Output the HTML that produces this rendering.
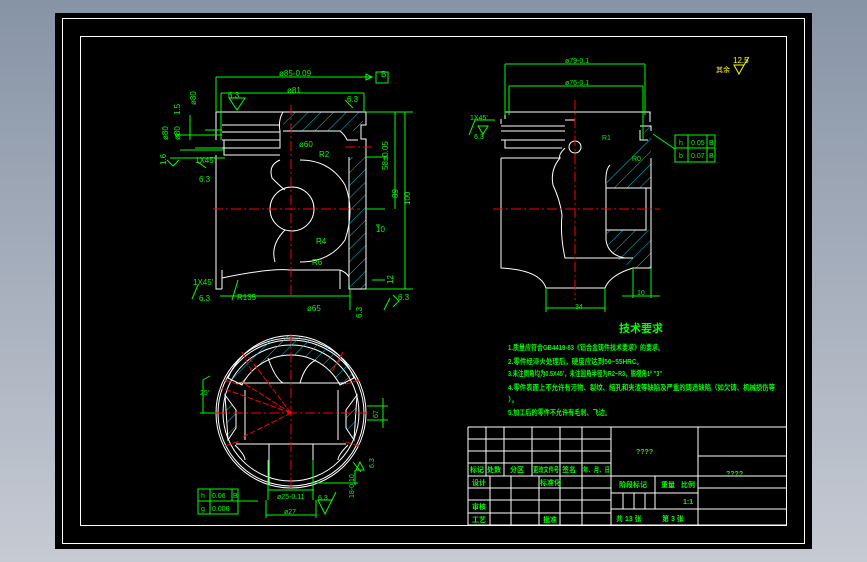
<!DOCTYPE html>
<html><head><meta charset="utf-8"><style>
html,body{margin:0;padding:0;width:867px;height:562px;overflow:hidden;background:linear-gradient(#8794a6,#c6cad3);}
svg{position:absolute;left:0;top:0}
text{font-family:"Liberation Sans","Noto Sans CJK SC",sans-serif;fill:#00ff00}
</style></head><body>
<svg width="867" height="562" viewBox="0 0 867 562">
<defs>
<pattern id="h" width="9" height="9" patternUnits="userSpaceOnUse" patternTransform="rotate(45)"><line x1="0" y1="0" x2="0" y2="9" stroke="#00c8e0" stroke-width="1"/></pattern>
</defs>
<rect x="55" y="13" width="757" height="536" fill="#000"/>
<rect x="62.5" y="18.5" width="742" height="525" fill="none" stroke="#fff" stroke-width="1"/>
<rect x="80.5" y="36.5" width="706" height="489" fill="none" stroke="#fff" stroke-width="1"/>

<!-- FRONT VIEW -->
<g fill="none" stroke="#fff" stroke-width="1">
<rect x="283" y="112" width="80" height="19" fill="url(#h)" stroke="none"/>
<rect x="349" y="157" width="17" height="132" fill="url(#h)" stroke="none"/>
<path d="M216 112 H366 V125 H361 V139 H366 V157 V289 H349 V157 M216 112 V140 M222 125 H280 M222 132 H280 M222 140 H280 M224 140 V155 H280 M216 155 V289 H222"/>
<path d="M283 112 Q278 120 280 131 V148 H216"/>
<path d="M283 131 H340 Q345 135 347 140 H358"/>
<path d="M222 278 Q270 268 290 270 H340 Q346 272 349 277 M222 270 V289 M340 270 V289"/>
<path d="M280 160 Q268 165 272 178 Q282 188 285 190 M300 160 Q330 160 345 185 Q355 210 345 240 Q330 262 300 262 M285 230 Q270 245 275 262"/>
<circle cx="292" cy="209" r="22"/>
</g>
<g stroke="#f00" stroke-width="1" stroke-dasharray="10,3,2,3"><line x1="291" y1="105" x2="291" y2="295"/><line x1="213" y1="209" x2="360" y2="209"/><line x1="345" y1="147" x2="372" y2="147"/></g>
<g stroke="#00ff00" stroke-width="1" fill="none">
<path d="M216 77 H372 M372 77 l-6 -3 v6 z M221 93 H364 M221 93 V140 M216 77 V112 M364 93 V112 M366 112 H413 M366 157 H388 M366 209 H385 M366 289 H413 M395 112 V209 M405 112 V289 M376 225 H380 M372 280 H385 M220 296 H350 M350 289 V310 M190 140 V115 M180 150 H225 M170 158 H225 M175 135 H222 M195 148 H222 M205 130 H222"/>
<rect x="376" y="72" width="12" height="11"/>
<path d="M229 98 l8 12 l8 -12 z M345 100 l8 8 M167 160 l6 6 l6 -6 M198 162 l8 6 M198 285 l-6 14 M232 300 l6 -20 M390 298 l-6 12 M393 295 l6 6 l-6 6"/>
</g>
<g font-size="8">
<text x="279" y="76">ø85-0.09</text><text x="287" y="93">ø81</text><text x="228" y="98">6.3</text><text x="347" y="102">6.3</text>
<text x="299" y="147">ø60</text><text x="195" y="163">1X45'</text><text x="199" y="182">6.3</text>
<text x="193" y="285">1X45'</text><text x="199" y="301">6.3</text><text x="237" y="300">R135</text>
<text x="307" y="311">ø65</text><text x="376" y="232">10</text><text x="398" y="300">6.3</text><text x="381" y="77">B</text>
<text x="316" y="244">R4</text><text x="312" y="265">R6</text><text x="319" y="157">R2</text>
<text transform="translate(388,170) rotate(-90)">58±0.05</text><text transform="translate(398,198) rotate(-90)">89</text><text transform="translate(410,205) rotate(-90)">100</text>
<text transform="translate(168,140) rotate(-90)">ø80</text><text transform="translate(180,140) rotate(-90)">ø80</text><text transform="translate(196,105) rotate(-90)">ø80</text><text transform="translate(166,165) rotate(-90)">1.6</text><text transform="translate(180,115) rotate(-90)">1.5</text><text transform="translate(393,284) rotate(-90)">12</text><text transform="translate(362,318) rotate(-90)">6.3</text>
</g>

<!-- RIGHT VIEW -->
<g fill="none" stroke="#fff" stroke-width="1">
<path d="M575 112 H650 V122 Q630 160 615 170 H607 V188 H651 V112" fill="url(#h)" stroke="none"/>
<path d="M607 230 H651 V268 H633 Q612 260 607 240 Z" fill="url(#h)" stroke="none"/>
<path d="M505 112 H650 V122 M501 119 V124 M501 126 H565 M501 131 H565 M501 140 H565 M505 140 V148 H562 M501 158 V268 Q540 270 546 288 H605 Q610 275 633 268 H651 V158 M505 112 V119 M501 158 H560 Q550 170 553 185 Q560 200 562 215 Q560 235 565 258 H633 M565 148 Q558 155 560 158"/>
<path d="M610 165 Q605 170 606 185 V240 Q608 255 625 258 M606 188 H646 V230 H606 M646 188 H651 V230"/>
<path d="M565 120 H575 M640 126 H651 V131 M640 130 V140 H648"/>
<circle cx="575" cy="147" r="6"/>
</g>
<g stroke="#f00" stroke-width="1" stroke-dasharray="10,3,2,3"><line x1="575" y1="100" x2="575" y2="300"/><line x1="493" y1="209" x2="660" y2="209"/></g>
<g stroke="#00ff00" stroke-width="1" fill="none">
<path d="M505 64 H645 M505 64 V115 M509 86 H643 M509 86 V115 M643 86 V140 M645 64 V115 M546 288 V312 M605 288 V312 M546 308 H605 M633 268 V298 M651 268 V298 M622 296 H660 M475 120 H495 M475 120 l-6 15 M478 126 l5 8 l5 -8 z M653 134 l22 15"/>
<rect x="675" y="135" width="40" height="27"/><path d="M675 148 H715 M688 135 V162 M707 135 V162"/>
</g>
<g font-size="7">
<text x="565" y="63">ø79-0.1</text><text x="565" y="85">ø76-0.1</text><text x="470" y="120">1X45'</text><text x="474" y="139">6.3</text>
<text x="575" y="309">34</text><text x="637" y="295">10</text><text x="602" y="140">R1</text><text x="632" y="161">R0</text>
<text x="679" y="145">h</text><text x="691" y="145">0.05</text><text x="709" y="145">B</text><text x="679" y="158">b</text><text x="691" y="158">0.07</text><text x="709" y="158">B</text>
</g>
<text x="716" y="72" font-size="7" style="fill:#ff0">其余</text><text x="733" y="63" font-size="8" style="fill:#ff0">12.5</text>
<path d="M734 65 l5 9 l5 -9 z M744 65 l5 -8" stroke="#ff0" fill="none"/>

<!-- BOTTOM VIEW -->
<g fill="none" stroke="#fff" stroke-width="1">
<circle cx="291" cy="413" r="75"/><circle cx="291" cy="413" r="73"/><circle cx="291" cy="413" r="68"/>
<path d="M228 378 A68 68 0 0 1 354 378 L340 385 A55 55 0 0 0 242 385 Z" fill="url(#h)"/>
<path d="M225 395 L236 410 V428 L228 440 Z" fill="url(#h)"/><path d="M357 395 L346 410 V428 L354 440 Z" fill="url(#h)"/>
<path d="M236 383 H346 M236 444 H346 M269 444 V485 M313 444 V485 M235 445 Q245 455 245 460 M348 445 Q338 455 338 460 M268 358 Q275 378 283 383 M300 383 Q305 365 316 360 M245 390 V440 M338 390 V440"/>
</g>
<g stroke="#f00" stroke-width="1"><line x1="291" y1="334" x2="291" y2="490" stroke-dasharray="10,3,2,3"/><line x1="215" y1="413" x2="367" y2="413" stroke-dasharray="10,3,2,3"/>
<path d="M291 413 L242 382 M291 413 L222 388 M291 413 L243 437 M291 413 L247 355 M242 352 L252 372 M343 352 L332 372 M225 380 L240 385 M359 380 L343 385 M225 446 L240 441 M359 446 L343 441" stroke-dasharray="6,2"/></g>
<g stroke="#00ff00" stroke-width="1" fill="none">
<path d="M200 413 H215 M203 413 V380 L210 376 M367 406 H388 M367 420 H388 M383 398 V428 M268 460 V500 M313 460 V500 M268 490 H314 M266 515 H316 M266 500 V518 M316 500 V518 M315 483 H358 M355 470 V485 M356 470 l4 -8 l4 8 z M353 462 l8 10 M318 500 l7 14 l7 -14 z M332 500 l4 -8"/>
<rect x="198" y="489" width="40" height="25"/><path d="M198 501 H238 M210 489 V514 M232 489 V501 M238 501 H258"/>
</g>
<g font-size="7">
<text x="200" y="395">25'</text><text x="277" y="499">ø25-0.11</text><text x="284" y="514">ø27</text><text x="318" y="500">6.3</text>
<text x="201" y="498">h</text><text x="212" y="498">0.06</text><text x="233" y="498">B</text><text x="201" y="511">g</text><text x="212" y="511">0.006</text>
<text transform="translate(378,418) rotate(-90)">67</text><text transform="translate(374,468) rotate(-90)">6.3</text><text transform="translate(354,498) rotate(-90)">18-0.10</text>
</g>

<!-- TECH REQUIREMENTS -->
<text x="619" y="332" font-size="11" font-weight="bold">技术要求</text>
<g font-size="7.2" font-weight="bold">
<text x="508" y="350" textLength="156" lengthAdjust="spacingAndGlyphs">1.质量应符合GB4419-83《铝合金铸件技术要求》的要求。</text>
<text x="508" y="364" textLength="135" lengthAdjust="spacingAndGlyphs">2.零件经淬火处理后，硬度应达到50~55HRC。</text>
<text x="508" y="376" textLength="154" lengthAdjust="spacingAndGlyphs">3.未注倒角均为0.5X45'，未注圆角半径为R2~R3，脱模角1° "3"</text>
<text x="508" y="390" textLength="267" lengthAdjust="spacingAndGlyphs">4.零件表面上不允许有污物、裂纹、缩孔和夹渣等缺陷及严重的铸造缺陷（如欠铸、机械损伤等</text>
<text x="508" y="402">）。</text>
<text x="508" y="415" textLength="103" lengthAdjust="spacingAndGlyphs">5.加工后的零件不允许有毛刺、飞边。</text>
</g>

<!-- TITLE BLOCK -->
<g stroke="#fff" stroke-width="1" fill="none">
<path d="M468 427 H786 M468 427 V525 M468 439 H611 M468 451 H611 M468 463 H611 M468 476 H786 M468 488 H611 M468 500 H611 M468 513 H611 M468 525 H786"/>
<path d="M486 427 V476 M504 427 V476 M532 427 V476 M560 427 V525 M582 427 V525 M611 427 V525 M698 427 V525 M490 476 V525 M511 476 V525 M539 476 V525"/>
<path d="M698 456 H786 M611 493 H698 M611 509 H786 M698 488 H786 M655 476 V509 M623 493 V509 M634 493 V509 M645 493 V509"/>
</g>
<g font-size="7" font-weight="bold">
<text x="636" y="454">????</text><text x="726" y="476">????</text>
<text x="470" y="472">标记</text><text x="487" y="472">处数</text><text x="510" y="472">分区</text><text x="533" y="472" textLength="26" lengthAdjust="spacingAndGlyphs">更改文件号</text><text x="562" y="472">签名</text><text x="583" y="472" textLength="27" lengthAdjust="spacingAndGlyphs">年、月、日</text>
<text x="472" y="485">设计</text><text x="540" y="485">标准化</text><text x="472" y="509">审核</text><text x="472" y="522">工艺</text><text x="543" y="522">批准</text>
<text x="619" y="487">阶段标记</text><text x="661" y="487">重量</text><text x="681" y="487">比例</text><text x="683" y="504">1:1</text>
<text x="616" y="521">共 13 张</text><text x="662" y="521">第 3 张</text>
</g>
</svg>
</body></html>
